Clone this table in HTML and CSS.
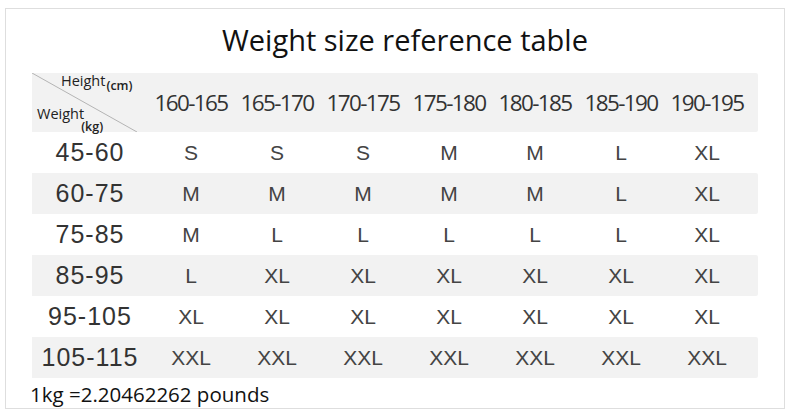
FILE: index.html
```html
<!DOCTYPE html>
<html>
<head>
<meta charset="utf-8">
<link rel="stylesheet" href="styles.css">
</head>
<body>
<div class="frame">
  <h1 class="title">Weight size reference table</h1>
  <div class="table">
    <div class="row head">
      <div class="corner">
        <svg class="diag" width="106" height="59" viewBox="0 0 106 59"><line x1="0" y1="0" x2="105" y2="59" stroke="#b4b4b4" stroke-width="1"/></svg>
        <span class="h-lbl">Height<small>(cm)</small></span>
        <span class="w-lbl">Weight<small>(kg)</small></span>
      </div>
      <div class="hc">160-165</div><div class="hc">165-170</div><div class="hc">170-175</div><div class="hc">175-180</div><div class="hc">180-185</div><div class="hc">185-190</div><div class="hc">190-195</div>
    </div>
    <div class="row"><div class="wc">45-60</div><div class="c">S</div><div class="c">S</div><div class="c">S</div><div class="c">M</div><div class="c">M</div><div class="c">L</div><div class="c">XL</div></div>
    <div class="row alt"><div class="wc">60-75</div><div class="c">M</div><div class="c">M</div><div class="c">M</div><div class="c">M</div><div class="c">M</div><div class="c">L</div><div class="c">XL</div></div>
    <div class="row"><div class="wc">75-85</div><div class="c">M</div><div class="c">L</div><div class="c">L</div><div class="c">L</div><div class="c">L</div><div class="c">L</div><div class="c">XL</div></div>
    <div class="row alt"><div class="wc">85-95</div><div class="c">L</div><div class="c">XL</div><div class="c">XL</div><div class="c">XL</div><div class="c">XL</div><div class="c">XL</div><div class="c">XL</div></div>
    <div class="row"><div class="wc">95-105</div><div class="c">XL</div><div class="c">XL</div><div class="c">XL</div><div class="c">XL</div><div class="c">XL</div><div class="c">XL</div><div class="c">XL</div></div>
    <div class="row alt"><div class="wc">105-115</div><div class="c">XXL</div><div class="c">XXL</div><div class="c">XXL</div><div class="c">XXL</div><div class="c">XXL</div><div class="c">XXL</div><div class="c">XXL</div></div>
  </div>
  <p class="note">1kg =2.20462262 pounds</p>
</div>
</body>
</html>
```

FILE: styles.css
```css
html, body {
  margin: 0;
  padding: 0;
  background: #fff;
}
body {
  padding: 8px 5px 0 5px;
}
.frame {
  box-sizing: border-box;
  width: 780px;
  height: 401px;
  border: 1px solid #dedede;
  padding: 0 0 0 26px;
  display: flex;
  flex-direction: column;
}
.title {
  flex-shrink: 0;
  margin: 0;
  height: 64px;
  font-family: "Open Sans", sans-serif;
  font-weight: 400;
  font-size: 29px;
  line-height: 62px;
  color: #111;
  text-align: center;
  padding-right: 6px;
}
.table {
  flex-shrink: 0;
  width: 726px;
  display: flex;
  flex-direction: column;
}
.row {
  flex-shrink: 0;
  display: grid;
  grid-template-columns: 116px repeat(7, 86px);
  height: 41px;
  align-items: center;
  background: #fff;
}
.row.alt, .row.head {
  background: #f2f2f2;
  border-radius: 0 2px 2px 0;
}
.row.head {
  height: 59px;
}
.corner {
  position: relative;
  height: 59px;
  font-family: "Open Sans", sans-serif;
  color: #222;
}
.diag {
  position: absolute;
  left: 0;
  top: 0;
}
.h-lbl, .w-lbl {
  position: absolute;
  font-size: 14.5px;
  line-height: 1;
}
.h-lbl small, .w-lbl small {
  font-size: 12.5px;
  font-weight: 600;
  position: relative;
  top: 4px;
  margin-left: 1px;
}
.h-lbl {
  left: 29px;
  top: 1px;
}
.w-lbl {
  left: 5px;
  top: 34px;
}
.w-lbl small {
  top: 12px;
  margin-left: -3px;
}
.hc {
  font-family: "Open Sans", sans-serif;
  font-size: 22.5px;
  letter-spacing: -1.6px;
  color: #333;
  text-align: center;
}
.wc {
  font-family: "Liberation Sans", Arial, sans-serif;
  font-size: 25px;
  letter-spacing: 1px;
  color: #333;
  text-align: center;
}
.c {
  font-family: "Liberation Sans", Arial, sans-serif;
  font-size: 21px;
  color: #444;
  text-align: center;
}
.note {
  flex: 1 1 auto;
  min-height: 0;
  margin: 0 0 0 -2px;
  font-family: "Open Sans", sans-serif;
  font-size: 20.5px;
  line-height: 32px;
  color: #111;
}
```
